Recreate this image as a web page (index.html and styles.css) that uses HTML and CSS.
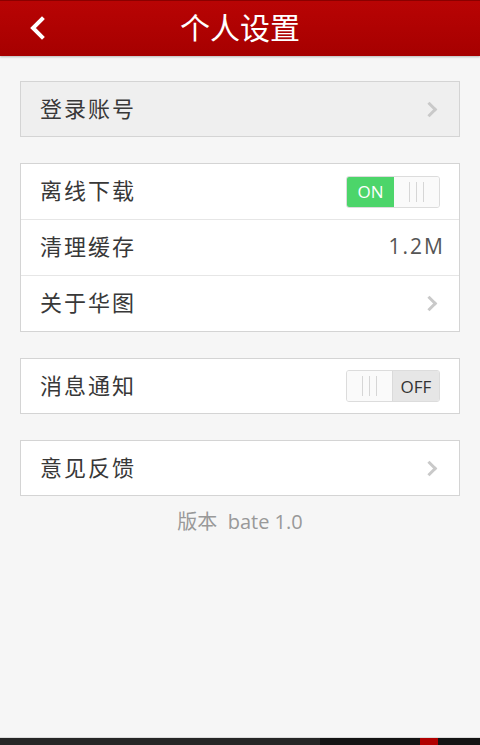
FILE: index.html
```html
<!DOCTYPE html>
<html lang="zh-CN">
<head>
<meta charset="utf-8">
<title>个人设置</title>
<link rel="stylesheet" href="styles.css">
</head>
<body>
<div class="page">
  <header class="topbar">
    <span class="back">
      <svg width="18" height="24" viewBox="0 0 18 24"><path d="M14 3 L5 12 L14 21" fill="none" stroke="#fff" stroke-width="4" stroke-linecap="square"/></svg>
    </span>
    <h1 class="title">个人设置</h1>
  </header>

  <main class="content">
    <section class="group group-grey">
      <div class="row"><span class="label">登录账号</span><span class="chev"></span></div>
    </section>

    <section class="group">
      <div class="row"><span class="label">离线下载</span>
        <span class="toggle on"><span class="knob-on">ON</span><span class="grip"><i></i><i></i><i></i></span></span>
      </div>
      <div class="row"><span class="label">清理缓存</span><span class="value">1.2M</span></div>
      <div class="row"><span class="label">关于华图</span><span class="chev"></span></div>
    </section>

    <section class="group">
      <div class="row"><span class="label">消息通知</span>
        <span class="toggle off"><span class="grip"><i></i><i></i><i></i></span><span class="knob-off">OFF</span></span>
      </div>
    </section>

    <section class="group">
      <div class="row"><span class="label">意见反馈</span><span class="chev"></span></div>
    </section>

    <p class="version">版本&nbsp;&nbsp;bate 1.0</p>
  </main>

  <footer class="sysbar">
    <span class="sys-left"></span>
    <span class="sys-right"><span class="sys-red"></span></span>
  </footer>
</div>
</body>
</html>
```

FILE: styles.css
```css
* { box-sizing: border-box; }
html, body { margin: 0; padding: 0; }
body {
  background: #f6f6f6;
  font-family: "Noto Sans CJK SC", "Open Sans", sans-serif;
  color: #333;
}
.page {
  height: 745px;
  display: flex;
  flex-direction: column;
  overflow: hidden;
}
.topbar {
  height: 56px;
  flex: none;
  background: linear-gradient(#b80404, #a60000);
  border-top: 1px solid #8a0000;
  box-shadow: 0 1px 2px rgba(0,0,0,0.25);
  display: grid;
  grid-template-columns: 80px 1fr 80px;
  align-items: center;
}
.back {
  display: flex;
  align-items: center;
  padding-left: 28px;
  padding-bottom: 2px;
  height: 100%;
}
.title {
  margin: 0 0 5px;
  text-align: center;
  color: #fff;
  font-size: 30px;
  font-weight: 400;
  line-height: 1;
}
.content {
  flex: 1;
  padding: 25px 20px 0;
  display: flex;
  flex-direction: column;
  gap: 26px;
}
.group {
  background: #fff;
  border: 1px solid #d4d4d4;
}
.group-grey { background: #efefef; }
.row {
  height: 56px;
  display: flex;
  align-items: center;
  justify-content: space-between;
  padding: 0 19px 0 19px;
  border-top: 1px solid #e6e6e6;
}
.row:first-child { border-top: none; height: 55px; }
.group .row:only-child { height: 54px; }
.label {
  font-size: 22px;
  line-height: 1;
  color: #383838;
  letter-spacing: 2px;
  margin-bottom: 5px;
}
.chev {
  width: 11px;
  height: 11px;
  border-top: 3px solid #c9c9c9;
  border-right: 3px solid #c9c9c9;
  transform: rotate(45deg);
  margin-right: 5px;
}
.value {
  font-family: "Open Sans", sans-serif;
  font-size: 21px;
  color: #555;
  letter-spacing: 2px;
  margin-right: -5px;
  margin-bottom: 3px;
}
.toggle {
  width: 94px;
  height: 32px;
  display: flex;
  border: 1px solid #dcdcdc;
  border-radius: 3px;
  overflow: hidden;
}
.knob-on {
  width: 47px;
  background: #4cd56a;
  color: #fff;
  font-family: "Open Sans", sans-serif;
  font-size: 17px;
  display: flex;
  align-items: center;
  justify-content: center;
}
.knob-off {
  width: 47px;
  background: #e6e6e6;
  color: #333;
  font-family: "Open Sans", sans-serif;
  font-size: 17px;
  display: flex;
  align-items: center;
  justify-content: center;
  border-left: 1px solid #dadada;
}
.grip {
  flex: 1;
  background: #fafafa;
  display: flex;
  justify-content: center;
  align-items: center;
  gap: 6px;
}
.grip i {
  width: 1px;
  height: 20px;
  background: #d6d6d6;
}
.version {
  margin: -16px 0 0;
  text-align: center;
  font-family: "Open Sans", "Noto Sans CJK SC", sans-serif;
  font-size: 20px;
  color: #999;
}
.sysbar {
  height: 8px;
  flex: none;
  display: grid;
  grid-template-columns: 320px 1fr;
  border-top: 1px solid #ddd;
}
.sys-left { background: #262626; }
.sys-right { background: #141414; display: flex; padding-left: 100px; }
.sys-red { width: 18px; background: #b00000; }
```
